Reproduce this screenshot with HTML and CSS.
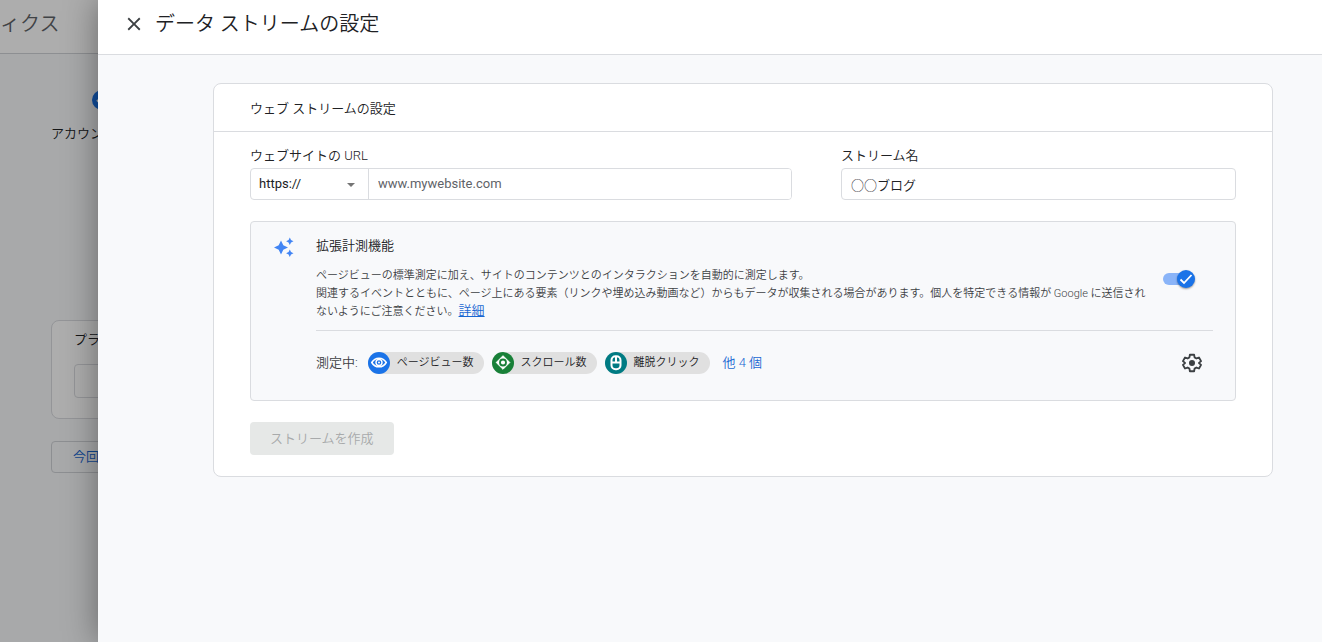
FILE: index.html
```html
<!DOCTYPE html>
<html lang="ja">
<head>
<meta charset="utf-8">
<meta name="viewport" content="width=device-width, initial-scale=1">
<title>データ ストリームの設定</title>
<link rel="stylesheet" href="styles.css">
</head>
<body>
<div class="backdrop-page">
  <header class="product-bar">ィクス</header>
  <div class="setup">
    <div class="step">
      <span class="step-mark"><svg viewBox="0 0 20 20" width="20" height="20" aria-hidden="true"><path d="M5 10l3.5 3.5L15 7" fill="none" stroke="#fff" stroke-width="2"/></svg></span>
      <span>アカウント</span>
    </div>
    <section class="platform">
      <div>プラットフォーム</div>
      <button class="platform-button" type="button" aria-label="ウェブ"></button>
    </section>
    <button class="skip" type="button">今回はスキップ</button>
  </div>
</div>
<div class="scrim"></div>

<main class="drawer">
  <header class="drawer-head">
    <button class="close" type="button" aria-label="閉じる"><svg viewBox="0 0 24 24" width="22" height="22" aria-hidden="true"><path d="M19 6.41L17.59 5 12 10.59 6.41 5 5 6.41 10.59 12 5 17.59 6.41 19 12 13.41 17.59 19 19 17.59 13.41 12z"/></svg></button>
    <h1>データ ストリームの設定</h1>
  </header>
  <div class="drawer-body">
    <section class="card">
      <h2>ウェブ ストリームの設定</h2>
      <form class="card-body">
        <div class="fields">
          <div class="field">
            <label for="url">ウェブサイトの URL</label>
            <div class="url-box">
              <div class="scheme">
                <select aria-label="プロトコル"><option>https://</option><option>http://</option></select>
                <svg viewBox="0 0 10 5" width="8" height="4" aria-hidden="true"><path d="M0 0h10L5 5z"/></svg>
              </div>
              <input id="url" type="text" placeholder="www.mywebsite.com">
            </div>
          </div>
          <div class="field">
            <label for="name">ストリーム名</label>
            <input class="name-box" id="name" type="text" value="○○ブログ">
          </div>
        </div>

        <section class="panel">
          <svg class="sparkle" viewBox="0 0 20 20" width="20" height="20" aria-hidden="true"><path d="M7 3.500l2.300 4.700L14 10.500 9.300 12.800 7 17.500 4.700 12.800 0 10.500 4.700 8.200zM15.800.5l1.200 2.500L19.500 4.200 17 5.400 15.800 7.900 14.600 5.400 12.100 4.200 14.600 3zM15.800 12.500l1.200 2.500 2.500 1.200-2.500 1.200-1.200 2.500-1.200-2.500-2.500-1.200 2.500-1.200z"/></svg>
          <div class="panel-main">
            <div class="measure">
              <div class="measure-text">
                <h3 id="measure-title">拡張計測機能</h3>
                <p>ページビューの標準測定に加え、サイトのコンテンツとのインタラクションを自動的に測定します。<br>関連するイベントとともに、ページ上にある要素（リンクや埋め込み動画など）からもデータが収集される場合があります。個人を特定できる情報が Google に送信されないようにご注意ください。<a href="#">詳細</a></p>
              </div>
              <label class="toggle">
                <input type="checkbox" checked aria-labelledby="measure-title">
                <span class="knob"><svg viewBox="0 0 18 18" width="18" height="18" aria-hidden="true"><path d="M3.500 9.500l3.500 3.500L14.500 5" fill="none" stroke="#fff" stroke-width="1.800"/></svg></span>
              </label>
            </div>
            <div class="tracking">
              <span class="tracking-label">測定中:</span>
              <span class="chip"><span class="chip-icon blue"><svg viewBox="0 0 22 22" width="22" height="22" aria-hidden="true"><path d="M3.800 10.500C7 4.800 15 4.800 18.200 10.500 15 16.200 7 16.200 3.800 10.500z" fill="none" stroke="#fff" stroke-width="1.600"/><circle cx="11" cy="10.500" r="3" fill="none" stroke="#fff" stroke-width="1.400"/><circle cx="11" cy="10.500" r="1" fill="#fff"/></svg></span>ページビュー数</span>
              <span class="chip"><span class="chip-icon green"><svg viewBox="0 0 22 22" width="22" height="22" aria-hidden="true"><path d="M11 3.700L17.800 10.500 11 17.300 4.200 10.500z" fill="#fff" stroke="#fff" stroke-linejoin="round"/><circle cx="11" cy="10.500" r="3" fill="none" stroke="#188038" stroke-width="1.800"/></svg></span>スクロール数</span>
              <span class="chip"><span class="chip-icon teal"><svg viewBox="0 0 22 22" width="22" height="22" aria-hidden="true"><rect x="6.500" y="4.200" width="9" height="13" rx="4" fill="none" stroke="#fff" stroke-width="2"/><path d="M6 10.500h10M11 5v5" stroke="#fff" stroke-width="2"/></svg></span>離脱クリック</span>
              <button class="more" type="button">他 4 個</button>
              <button class="gear" type="button" aria-label="設定"><svg viewBox="0 0 24 24" width="22" height="22" aria-hidden="true"><path d="M9.700 3h4.600l.5 2.900 2 1.150 2.800-1.050 2.300 4-2.300 1.900v.2l2.300 1.900-2.300 4-2.800-1.050-2 1.150-.5 2.900H9.700l-.5-2.900-2-1.150L4.400 18l-2.300-4 2.300-1.900v-.2L2.100 10l2.300-4 2.800 1.050 2-1.150z" fill="none" stroke="#3c4043" stroke-width="2" stroke-linejoin="round"/><circle cx="12" cy="12" r="3.300"/></svg></button>
            </div>
          </div>
        </section>
        <button class="create" type="submit" disabled>ストリームを作成</button>
      </form>
    </section>
  </div>
</main>
</body>
</html>
```

FILE: styles.css
```css
* { box-sizing: border-box; }

body {
  margin: 0;
  min-height: 100vh;
  overflow: hidden;
  background: #f8f9fb;
  color: #202124;
  font: 350 13px/18px Roboto, "Noto Sans CJK JP", sans-serif;
}

h1, h2, h3, p { margin: 0; font-weight: inherit; }
button, input, select { font: inherit; color: inherit; }
button { padding: 0; border: 0; background: none; cursor: pointer; }

/* Page behind the drawer */
.backdrop-page { white-space: nowrap; }
.product-bar {
  height: 54px;
  padding: 10px 0;
  border-bottom: 1px solid #d0d3d7;
  background: #fff;
  color: #5f6368;
  font-size: 20px;
  line-height: 28px;
}
.setup { padding: 36px 0 0 51px; }
.step {
  display: flex;
  flex-direction: column;
  gap: 15px;
  height: 230px;
}
.step-mark {
  width: 20px;
  height: 20px;
  margin-left: 41px;
  border-radius: 50%;
  background: #1a73e8;
}
.platform {
  width: 600px;
  height: 99px;
  padding: 10px 22px;
  border: 1px solid #dadce0;
  border-radius: 8px;
  background: #fff;
}
.platform-button {
  width: 120px;
  height: 34px;
  margin-top: 15px;
  border: 1px solid #dadce0;
  border-radius: 4px;
}
.skip {
  display: block;
  height: 32px;
  margin-top: 22px;
  padding: 0 21px;
  border: 1px solid #d0d3d7;
  border-radius: 4px;
  color: #1967d2;
}
.scrim {
  position: absolute;
  inset: 0;
  background: rgba(0, 0, 0, .32);
}

/* Drawer */
.drawer {
  position: absolute;
  inset: 0 0 0 98px;
  overflow: auto;
  background: #f8f9fb;
  box-shadow: 0 0 32px rgba(0, 0, 0, .4);
}
.drawer-head {
  display: flex;
  align-items: center;
  gap: 10px;
  padding: 10px 25px 16px;
  border-bottom: 1px solid #dadce0;
  background: #fff;
}
.close { display: flex; fill: #3c4043; }
h1 { font-size: 20px; line-height: 28px; }
.drawer-body { padding: 28px 49px 28px 115px; }
.card {
  border: 1px solid #dadce0;
  border-radius: 8px;
  background: #fff;
}
h2 {
  padding: 16px 36px 13px;
  border-bottom: 1px solid #dadce0;
  font-size: 13px;
  line-height: 18px;
}
.card-body { padding: 15px 36px 21px; }
.fields {
  display: grid;
  grid-template-columns: 542fr 395fr;
  gap: 49px;
}
.field {
  display: flex;
  flex-direction: column;
  gap: 3px;
}
.url-box, .name-box {
  height: 32px;
  border: 1px solid #dadce0;
  border-radius: 4px;
  background: #fff;
}
.url-box { display: flex; overflow: hidden; font-weight: 400; }
.url-box input {
  flex: 1;
  min-width: 0;
  padding: 0 9px;
  border: 0;
  outline: 0;
}
.url-box input::placeholder { color: #5f6368; opacity: 1; }
.scheme {
  position: relative;
  width: 118px;
  border-right: 1px solid #dadce0;
}
.scheme select {
  width: 100%;
  height: 100%;
  padding: 0 8px;
  border: 0;
  outline: 0;
  appearance: none;
  background: none;
}
.scheme svg {
  position: absolute;
  top: 14px;
  right: 13px;
  fill: #757575;
  pointer-events: none;
}
.name-box { width: 100%; padding: 0 9px; }

/* Enhanced measurement */
.panel {
  display: flex;
  gap: 22px;
  margin-top: 21px;
  padding: 15px 22px 26px 23px;
  border: 1px solid #dadce0;
  border-radius: 4px;
  background: #f8f9fb;
}
.sparkle { flex: none; fill: #4285f4; }
.panel-main { flex: 1; min-width: 0; }
.measure {
  display: flex;
  align-items: center;
  padding-bottom: 9px;
  border-bottom: 1px solid #dadce0;
}
.measure-text { flex: 1; }
h3 { font-size: 13px; line-height: 18px; }
.measure p {
  margin-top: 12px;
  color: #3c4043;
  font-size: 11px;
  line-height: 18px;
}
.measure a { color: #1967d2; font-size: 13px; line-height: 16px; }
.toggle {
  position: relative;
  flex: none;
  width: 32px;
  height: 18px;
  margin: 0 18px 0 8px;
}
.toggle input {
  width: 30px;
  height: 12px;
  margin: 3px 0;
  border-radius: 6px;
  appearance: none;
  background: #8ab4f8;
  display: block;
}
.knob {
  position: absolute;
  top: 0;
  right: 0;
  width: 18px;
  height: 18px;
  border-radius: 50%;
  background: #1a73e8;
  box-shadow: 0 1px 2px rgba(0, 0, 0, .4);
}
.knob svg, .chip-icon svg, .step-mark svg { display: block; }
.tracking {
  display: flex;
  align-items: center;
  gap: 8px;
  padding-top: 21px;
}
.tracking-label { margin-right: 2px; color: #3c4043; }
.chip {
  display: flex;
  align-items: center;
  gap: 7px;
  padding-right: 10px;
  border-radius: 11px;
  background: #e0e0e0;
  font-size: 11px;
  line-height: 22px;
}
.chip-icon { border-radius: 50%; }
.blue { background: #1a73e8; }
.green { background: #188038; }
.teal { background: #007b83; }
.more { margin-left: 5px; color: #1967d2; }
.gear { display: flex; margin: 0 10px 0 auto; fill: #3c4043; }
.create {
  height: 33px;
  margin-top: 21px;
  padding: 0 20px;
  border-radius: 4px;
  background: #e6e8e7;
  color: #a8aaab;
  display: block;
}
```
